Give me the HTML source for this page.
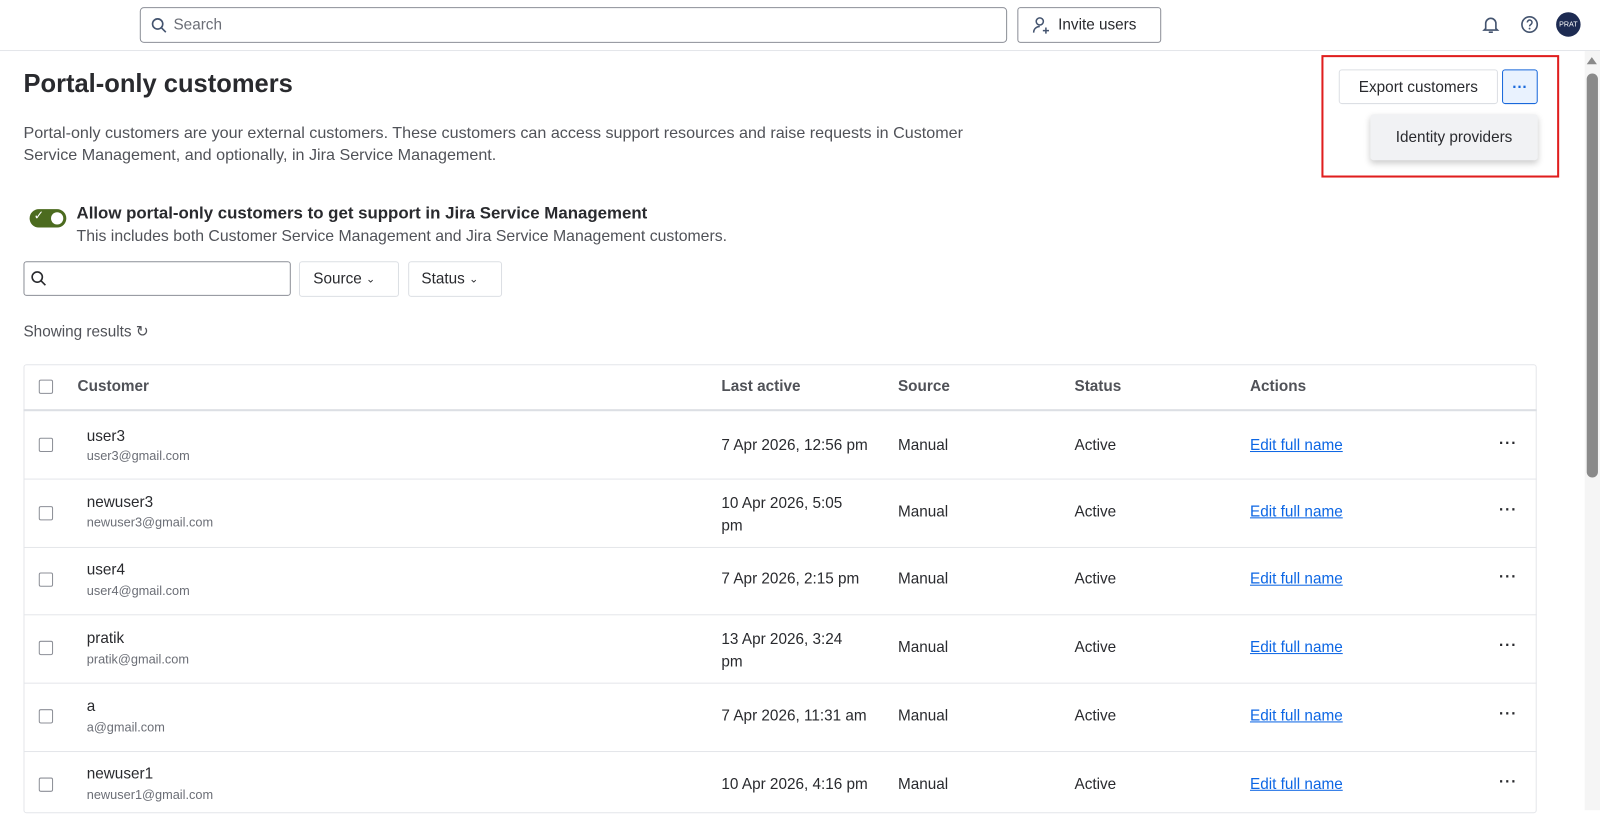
<!DOCTYPE html>
<html><head><meta charset="utf-8"><style>
*{box-sizing:border-box;margin:0;padding:0}
body{width:1600px;height:794px;overflow:hidden;background:#fff;font-family:"Liberation Sans",sans-serif;color:#172b4d;position:relative}
#w{position:absolute;left:0;top:0;width:1568px;height:778px;transform:scale(1.0204);transform-origin:0 0}
.a{position:absolute}
.btn{position:absolute;border:1px solid #c1c7d0;border-radius:3px;background:#fff;font-size:15px;color:#292a2e;display:flex;align-items:center}
.cb{position:absolute;width:14px;height:14px;border:1.5px solid #8c8f97;border-radius:2px;background:#fff}
.row{position:absolute;left:23px;width:1483px;border-bottom:1px solid #e4e6ea;font-size:15px;color:#292a2e}
.row span{position:absolute}
.lnk{color:#0c66e4;text-decoration:underline}
.dots{font-weight:bold;letter-spacing:1px}
.mail{font-size:12.5px;color:#6b6e76}
</style></head><body><div id="w">
<div class="a" style="left:0;top:49px;width:1568px;height:1px;background:#e4e6ea"></div>
<div class="btn" style="left:137px;top:7px;width:850px;height:35px;border-color:#8c8f97;border-radius:4px;color:#6b6e76;padding-left:10px">
<svg width="16" height="16" viewBox="0 0 16 16" style="margin-right:6px"><circle cx="6.5" cy="6.5" r="5" fill="none" stroke="#44546f" stroke-width="1.6"/><path d="M10 10l4.5 4.5" stroke="#44546f" stroke-width="1.6"/></svg>Search</div>
<div class="btn" style="left:997px;top:7px;width:141px;height:35px;padding-left:13px;border-color:#8c8f97">
<svg width="20" height="20" viewBox="0 0 20 20" style="margin-right:6px"><circle cx="8" cy="6" r="3.5" fill="none" stroke="#44546f" stroke-width="1.5"/><path d="M2 17c0-4 3-6 6-6" fill="none" stroke="#44546f" stroke-width="1.5"/><path d="M14 12v6M11 15h6" stroke="#44546f" stroke-width="1.5"/></svg>Invite users</div>
<svg class="a" style="left:1451px;top:14px" width="20" height="20" viewBox="0 0 20 20"><path d="M5 14V9a5 5 0 0110 0v5l1.5 1.5h-13z" fill="none" stroke="#44546f" stroke-width="1.6"/><path d="M8 17.5h4" stroke="#44546f" stroke-width="1.6"/></svg>
<svg class="a" style="left:1489px;top:14px" width="20" height="20" viewBox="0 0 20 20"><circle cx="10" cy="10" r="7.5" fill="none" stroke="#44546f" stroke-width="1.6"/><path d="M7.8 8a2.3 2.3 0 114 1.5c-.8.7-1.8 1-1.8 2.3" fill="none" stroke="#44546f" stroke-width="1.5"/><circle cx="10" cy="14" r=".9" fill="#44546f"/></svg>
<div class="a" style="left:1525px;top:12px;width:24px;height:24px;border-radius:50%;background:#1d2b52;color:#fff;font-size:7px;display:flex;align-items:center;justify-content:center">PRAT</div>

<div class="a" style="left:1553px;top:50px;width:15px;height:744px;background:#f5f5f5"></div>
<div class="a" style="left:1555px;top:72px;width:11px;height:396px;background:#8a8a8a;border-radius:6px"></div>
<div class="a" style="left:1555px;top:56px;width:0;height:0;border-left:5px solid transparent;border-right:5px solid transparent;border-bottom:7px solid #8a8a8a"></div>

<div class="a" style="left:23px;top:68px;font-size:25px;font-weight:bold;color:#292a2e">Portal-only customers</div>
<div class="a" style="left:23px;top:120px;width:985px;font-size:15.8px;line-height:22px;color:#505258">Portal-only customers are your external customers. These customers can access support resources and raise requests in Customer<br>Service Management, and optionally, in Jira Service Management.</div>

<div class="btn" style="left:1312px;top:68px;width:156px;height:34px;justify-content:center;border-color:#dcdfe4">Export customers</div>
<div class="btn" style="left:1472px;top:68px;width:35px;height:34px;justify-content:center;border:1.5px solid #1868db;background:#e9f2fe;color:#1868db;font-weight:bold">···</div>
<div class="a" style="left:1343px;top:112px;width:164px;height:45px;background:#f1f2f4;border-radius:3px;box-shadow:0 3px 6px rgba(0,0,0,.2);font-size:15px;color:#292a2e;display:flex;align-items:center;justify-content:center">Identity providers</div>
<div class="a" style="left:1295px;top:54px;width:233px;height:120px;border:2.5px solid #e01e1e"></div>

<div class="a" style="left:29px;top:205px;width:36px;height:18px;border-radius:9px;background:#4c6b1f"></div>
<div class="a" style="left:50px;top:208px;width:12px;height:12px;border-radius:50%;background:#fff"></div>
<div class="a" style="left:33px;top:204px;color:#fff;font-size:12px">✓</div>
<div class="a" style="left:75px;top:200px;font-size:16.5px;font-weight:bold;color:#292a2e">Allow portal-only customers to get support in Jira Service Management</div>
<div class="a" style="left:75px;top:223px;font-size:15.5px;color:#505258">This includes both Customer Service Management and Jira Service Management customers.</div>

<div class="btn" style="left:23px;top:256px;width:262px;height:34px;border-color:#8c8f97;padding-left:6px"><svg width="16" height="16" viewBox="0 0 16 16"><circle cx="6.5" cy="6.5" r="5" fill="none" stroke="#292a2e" stroke-width="1.6"/><path d="M10 10l4.5 4.5" stroke="#292a2e" stroke-width="1.6"/></svg></div>
<div class="btn" style="left:293px;top:256px;width:98px;height:35px;padding-left:13px;border-color:#dcdfe4">Source&nbsp;<span style="font-size:11px">&#8964;</span></div>
<div class="btn" style="left:400px;top:256px;width:92px;height:35px;padding-left:12px;border-color:#dcdfe4">Status&nbsp;<span style="font-size:11px">&#8964;</span></div>

<div class="a" style="left:23px;top:316px;font-size:15px;color:#505258">Showing results ↻</div>

<div class="a" style="left:23px;top:357px;width:1483px;height:440px;border:1px solid #e4e6ea;border-radius:3px"></div>
<div class="row" style="top:357px;height:46px;border-bottom:2px solid #dcdfe4;font-weight:bold;color:#505258">
<div class="cb" style="left:15px;top:15px"></div>
<span style="left:53px;top:13px">Customer</span><span style="left:684px;top:13px">Last active</span><span style="left:857px;top:13px">Source</span><span style="left:1030px;top:13px">Status</span><span style="left:1202px;top:13px">Actions</span></div>

<div class="row" style="top:403px;height:67px"><div class="cb" style="left:15px;top:26px"></div><span style="left:62px;top:16px">user3</span><span class="mail" style="left:62px;top:37px">user3@gmail.com</span><span style="left:684px;top:25px">7 Apr 2026, 12:56 pm</span><span style="left:857px;top:25px">Manual</span><span style="left:1030px;top:25px">Active</span><span class="lnk" style="left:1202px;top:25px">Edit full name</span><span class="dots" style="left:1446px;top:23px">···</span></div>
<div class="row" style="top:470px;height:67px"><div class="cb" style="left:15px;top:26px"></div><span style="left:62px;top:14px">newuser3</span><span class="mail" style="left:62px;top:35px">newuser3@gmail.com</span><span style="left:684px;top:13px;line-height:22px">10 Apr 2026, 5:05<br>pm</span><span style="left:857px;top:23px">Manual</span><span style="left:1030px;top:23px">Active</span><span class="lnk" style="left:1202px;top:23px">Edit full name</span><span class="dots" style="left:1446px;top:21px">···</span></div>
<div class="row" style="top:537px;height:66px"><div class="cb" style="left:15px;top:24px"></div><span style="left:62px;top:13px">user4</span><span class="mail" style="left:62px;top:35px">user4@gmail.com</span><span style="left:684px;top:22px">7 Apr 2026, 2:15 pm</span><span style="left:857px;top:22px">Manual</span><span style="left:1030px;top:22px">Active</span><span class="lnk" style="left:1202px;top:22px">Edit full name</span><span class="dots" style="left:1446px;top:20px">···</span></div>
<div class="row" style="top:603px;height:67px"><div class="cb" style="left:15px;top:25px"></div><span style="left:62px;top:14px">pratik</span><span class="mail" style="left:62px;top:36px">pratik@gmail.com</span><span style="left:684px;top:13px;line-height:22px">13 Apr 2026, 3:24<br>pm</span><span style="left:857px;top:23px">Manual</span><span style="left:1030px;top:23px">Active</span><span class="lnk" style="left:1202px;top:23px">Edit full name</span><span class="dots" style="left:1446px;top:21px">···</span></div>
<div class="row" style="top:670px;height:67px"><div class="cb" style="left:15px;top:25px"></div><span style="left:62px;top:14px">a</span><span class="mail" style="left:62px;top:36px">a@gmail.com</span><span style="left:684px;top:23px">7 Apr 2026, 11:31 am</span><span style="left:857px;top:23px">Manual</span><span style="left:1030px;top:23px">Active</span><span class="lnk" style="left:1202px;top:23px">Edit full name</span><span class="dots" style="left:1446px;top:21px">···</span></div>
<div class="row" style="top:737px;height:67px;border:none"><div class="cb" style="left:15px;top:25px"></div><span style="left:62px;top:13px">newuser1</span><span class="mail" style="left:62px;top:35px">newuser1@gmail.com</span><span style="left:684px;top:23px">10 Apr 2026, 4:16 pm</span><span style="left:857px;top:23px">Manual</span><span style="left:1030px;top:23px">Active</span><span class="lnk" style="left:1202px;top:23px">Edit full name</span><span class="dots" style="left:1446px;top:21px">···</span></div>
</div></body></html>
